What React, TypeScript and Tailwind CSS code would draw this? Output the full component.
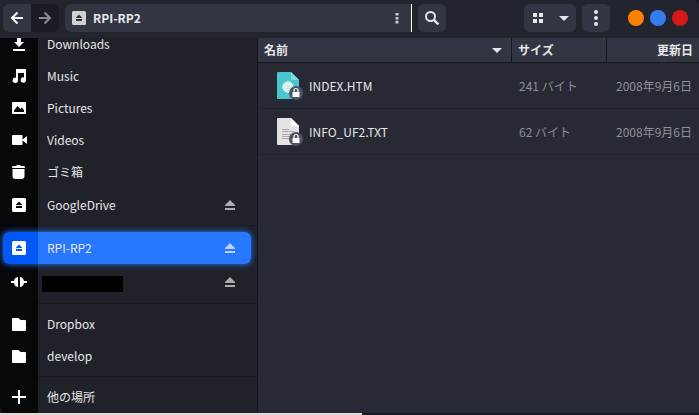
import type { ReactNode } from "react";

type IconProps = { className?: string };

const ArrowIcon = ({ className = "" }: IconProps) => (
  <svg className={className} width="14" height="14" viewBox="0 0 14 14" fill="none" stroke="currentColor" strokeWidth="2" aria-hidden="true">
    <path d="M13 7H2.500M7.500 1.500 2 7l5.500 5.500" />
  </svg>
);

const DriveIcon = ({ className = "" }: IconProps) => (
  <svg className={className} width="14" height="14" viewBox="0 0 14 14" fill="currentColor" fillRule="evenodd" aria-hidden="true">
    <path d="M1.500 0h11A1.500 1.500 0 0 1 14 1.500v11a1.500 1.500 0 0 1-1.500 1.500h-11A1.500 1.500 0 0 1 0 12.500v-11A1.500 1.500 0 0 1 1.500 0zM7 3.500 4 6.500V7h6v-.500zM4 8v2h6V8z" />
  </svg>
);

const DotsIcon = ({ small = false }: { small?: boolean }) => (
  <svg width="4" height={small ? 12 : 16} viewBox={small ? "0 0 4 12" : "0 0 4 16"} fill="currentColor" aria-hidden="true">
    {small ? (
      <path d="M.500 1h3v2.600h-3zM.500 4.900h3v2.600h-3zM.500 8.800h3v2.600h-3z" />
    ) : (
      <>
        <circle cx="2" cy="2" r="2" />
        <circle cx="2" cy="8" r="2" />
        <circle cx="2" cy="14" r="2" />
      </>
    )}
  </svg>
);

const CaretIcon = ({ className = "" }: IconProps) => (
  <svg className={className} width="10" height="5" viewBox="0 0 10 5" fill="currentColor" aria-hidden="true">
    <path d="M0 0h10L5 5z" />
  </svg>
);

const SearchIcon = () => (
  <svg width="14" height="14" viewBox="0 0 14 14" fill="none" stroke="currentColor" strokeWidth="2" aria-hidden="true">
    <circle cx="5.500" cy="5.500" r="4.500" />
    <path d="m8.800 8.800 4.600 4.600" strokeWidth="2.400" />
  </svg>
);

const GridIcon = () => (
  <svg width="10" height="10" viewBox="0 0 10 10" fill="currentColor" aria-hidden="true">
    <path d="M0 0h4v4H0zM6 0h4v4H6zM0 6h4v4H0zM6 6h4v4H6z" />
  </svg>
);

const DownloadIcon = () => (
  <svg width="16" height="16" viewBox="0 0 16 16" fill="currentColor" aria-hidden="true">
    <path d="M6 0h4v6h3l-5 5-5-5h3zM2 13h12v2H2z" />
  </svg>
);

const MusicIcon = () => (
  <svg width="16" height="16" viewBox="0 0 16 16" fill="currentColor" aria-hidden="true">
    <path d="M5 1h10v11a2.700 2.700 0 1 1-2-2.600V5H7v7.300a2.700 2.700 0 1 1-2-2.600z" />
  </svg>
);

const PictureIcon = () => (
  <svg width="14" height="12" viewBox="0 0 14 12" fill="currentColor" fillRule="evenodd" aria-hidden="true">
    <path d="M1 0h12a1 1 0 0 1 1 1v10a1 1 0 0 1-1 1H1a1 1 0 0 1-1-1V1a1 1 0 0 1 1-1zM2 10h10V8L10 5.500 8.500 7 5.500 4 2 8.500z" />
  </svg>
);

const VideoIcon = () => (
  <svg width="16" height="10" viewBox="0 0 16 10" fill="currentColor" aria-hidden="true">
    <path d="M2 0h8.500a1 1 0 0 1 1 1v8a1 1 0 0 1-1 1H2a1 1 0 0 1-1-1V1a1 1 0 0 1 1-1zM11 5l5-4v8z" />
  </svg>
);

const TrashIcon = () => (
  <svg width="14" height="14" viewBox="0 0 14 14" fill="currentColor" aria-hidden="true">
    <path d="M4.500 0h4v1H12a.800.800 0 0 1 .800.800V3H.200V1.800A.800.800 0 0 1 1 1h3.500zM.500 4h12v7a3 3 0 0 1-3 3h-6a3 3 0 0 1-3-3z" />
  </svg>
);

const NetworkIcon = () => (
  <svg width="16" height="10" viewBox="0 0 16 10" fill="currentColor" aria-hidden="true">
    <path d="M0 4h3a4.500 4.500 0 0 1 4-4v10a4.500 4.500 0 0 1-4-4H0zM16 4h-3a4.500 4.500 0 0 0-4-4v10a4.500 4.500 0 0 0 4-4h3z" />
  </svg>
);

const FolderIcon = () => (
  <svg width="14" height="13" viewBox="0 0 14 13" fill="currentColor" aria-hidden="true">
    <path d="M1 0h5.500l2 2H13a1 1 0 0 1 1 1v9a1 1 0 0 1-1 1H1a1 1 0 0 1-1-1V1a1 1 0 0 1 1-1z" />
  </svg>
);

const PlusIcon = () => (
  <svg width="14" height="14" viewBox="0 0 14 14" fill="currentColor" aria-hidden="true">
    <path d="M6 0h2v6h6v2H8v6H6V8H0V6h6z" />
  </svg>
);

const EjectIcon = () => (
  <svg width="10" height="10" viewBox="0 0 10 10" fill="currentColor" aria-hidden="true">
    <path d="m5 0 5 5v1H0V5zM0 8h10v2H0z" />
  </svg>
);

const LockBadge = () => (
  <>
    <circle cx="19" cy="21" r="7" fill="#4f5360" />
    <path d="M15.500 20h7v5h-7z" fill="#fff" />
    <path d="M17 20.500v-2a2 2 0 0 1 4 0v2" fill="none" stroke="#fff" strokeWidth="1.200" />
  </>
);

const HtmlFileIcon = () => (
  <svg width="26" height="28" viewBox="0 0 26 28" aria-hidden="true">
    <path d="M1 0h13l8 8v18a1 1 0 0 1-1 1H1a1 1 0 0 1-1-1V1a1 1 0 0 1 1-1z" fill="#4bc5cf" />
    <path d="M14 0l8 8h-7a1 1 0 0 1-1-1z" fill="#80dbe1" />
    <circle cx="11" cy="15" r="5.500" fill="#9be3e8" />
    <g fill="none" stroke="#fff" strokeWidth="1">
      <circle cx="11" cy="15" r="5" />
      <ellipse cx="11" cy="15" rx="2.300" ry="5" />
      <path d="M6 15h10M7 12.500h8M7 17.500h8" />
    </g>
    <LockBadge />
  </svg>
);

const TextFileIcon = () => (
  <svg width="26" height="28" viewBox="0 0 26 28" aria-hidden="true">
    <path d="M1 0h13l8 8v18a1 1 0 0 1-1 1H1a1 1 0 0 1-1-1V1a1 1 0 0 1 1-1z" fill="#e3e3e3" />
    <path d="M14 0l8 8h-7a1 1 0 0 1-1-1z" fill="#fff" />
    <path d="M5 11.500h7M5 13.500h12M5 16.500h12M5 18.500h9M5 20.500h7" stroke="#aaa" strokeWidth="1" />
    <LockBadge />
  </svg>
);

type Place = { label: string; icon: ReactNode; eject?: boolean; selected?: boolean; hidden?: boolean };

const folders: Place[] = [
  { label: "Downloads", icon: <DownloadIcon /> },
  { label: "Music", icon: <MusicIcon /> },
  { label: "Pictures", icon: <PictureIcon /> },
  { label: "Videos", icon: <VideoIcon /> },
  { label: "ゴミ箱", icon: <TrashIcon /> },
];
const drives: Place[] = [{ label: "GoogleDrive", icon: <DriveIcon />, eject: true }];
const devices: Place[] = [
  { label: "RPI-RP2", icon: <DriveIcon />, eject: true, selected: true },
  { label: "", icon: <NetworkIcon />, eject: true, hidden: true },
];
const bookmarks: Place[] = [
  { label: "Dropbox", icon: <FolderIcon /> },
  { label: "develop", icon: <FolderIcon /> },
];
const others: Place[] = [{ label: "他の場所", icon: <PlusIcon /> }];

function PlaceRow({ place }: { place: Place }) {
  return (
    <li
      className={`ml-[3px] mr-1.5 flex h-8 items-center rounded-md ${
        place.selected
          ? "bg-[linear-gradient(to_right,#0059f5_35px,#2777ff_35px)] shadow-[0_0_6px_#2777ff]"
          : ""
      }`}
    >
      <button type="button" aria-label={place.hidden ? "Network" : undefined} className="flex h-full min-w-0 flex-1 items-center text-left">
        <span className="flex w-8 shrink-0 justify-center text-white">{place.icon}</span>
        {place.hidden ? (
          <span className="ml-[7px] mt-1 h-4 w-[81px] bg-black" />
        ) : (
          <span className="ml-3 leading-none">{place.label}</span>
        )}
      </button>
      {place.eject && (
        <button type="button" aria-label="Eject" className={`mr-4 ${place.selected ? "text-[#b9d2ff]" : "text-[#adaeb0]"}`}>
          <EjectIcon />
        </button>
      )}
    </li>
  );
}

function PlaceGroup({ places, className }: { places: Place[]; className: string }) {
  return (
    <ul className={className}>
      {places.map((place, i) => (
        <PlaceRow key={i} place={place} />
      ))}
    </ul>
  );
}

const files = [
  { name: "INDEX.HTM", size: "241 バイト", date: "2008年9月6日", icon: <HtmlFileIcon /> },
  { name: "INFO_UF2.TXT", size: "62 バイト", date: "2008年9月6日", icon: <TextFileIcon /> },
];

export default function App() {
  return (
    <div className="flex h-screen flex-col overflow-hidden bg-[#171921] font-['Noto_Sans_CJK_JP',sans-serif] text-xs text-[#e6e6e8]">
      <header className="flex h-[38px] shrink-0 items-start rounded-tr-md bg-[#22252d] pl-[3px] pr-[11px] pt-1">
        <div className="flex h-7 overflow-hidden rounded-md">
          <button type="button" aria-label="Back" className="flex w-7 items-center justify-center bg-[#323643] text-white">
            <ArrowIcon />
          </button>
          <button type="button" aria-label="Forward" disabled className="flex w-7 items-center justify-center bg-[#1a1c23] text-[#8b8c90]">
            <ArrowIcon className="rotate-180" />
          </button>
        </div>
        <div className="ml-1.5 flex h-7 w-[347px] min-w-0 shrink items-center rounded-l-md border-r border-white bg-[#323643] pl-[7px] pr-3">
          <button type="button" className="flex min-w-0 flex-1 items-center gap-[7px] font-bold">
            <DriveIcon className="text-[#d0d1d3]" />
            RPI-RP2
          </button>
          <button type="button" aria-label="Path options" className="text-[#c8c9cc]">
            <DotsIcon small />
          </button>
        </div>
        <button type="button" aria-label="Search" className="ml-1.5 flex size-7 shrink-0 items-center justify-center rounded-md bg-[#323643]">
          <SearchIcon />
        </button>
        <div className="ml-auto flex h-7 shrink-0 rounded-md bg-[#323643]">
          <button type="button" aria-label="Icon view" className="flex w-7 items-center justify-center">
            <GridIcon />
          </button>
          <button type="button" aria-label="View options" className="flex w-6 items-center justify-center">
            <CaretIcon />
          </button>
        </div>
        <button type="button" aria-label="Menu" className="ml-1.5 flex size-7 shrink-0 items-center justify-center rounded-md bg-[#323643]">
          <DotsIcon />
        </button>
        <div className="ml-[18px] flex h-7 shrink-0 items-center gap-1.5">
          <button type="button" aria-label="Minimize" className="size-4 rounded-full bg-[#ff8000]" />
          <button type="button" aria-label="Maximize" className="size-4 rounded-full bg-[#367bf0]" />
          <button type="button" aria-label="Close" className="size-4 rounded-full bg-[#d41919]" />
        </div>
      </header>

      <div className="flex min-h-0 flex-1">
        <nav className="flex w-[258px] shrink-0 flex-col justify-end overflow-hidden rounded-bl-md border-r border-[#15171e] bg-[linear-gradient(to_right,#07080a_38px,#1f2229_38px)]">
          <PlaceGroup places={folders} className="pb-px" />
          <PlaceGroup places={drives} className="pb-1" />
          <PlaceGroup places={devices} className="flex flex-col gap-0.5 border-t border-black/15 pb-[5px] pt-1.5" />
          <PlaceGroup places={bookmarks} className="border-t border-black/15 pb-1 pt-1" />
          <PlaceGroup places={others} className="border-t border-black/15 pt-1" />
        </nav>

        <main className="min-w-0 flex-1 bg-[#272a34]">
          <table className="w-full table-fixed border-separate border-spacing-0">
            <thead className="bg-[#323643]">
              <tr className="h-[25px]">
                <th scope="col" className="border-b border-r border-[#15171e] p-0">
                  <button type="button" className="flex w-full items-center justify-between pl-1.5 pr-[9px] font-bold">
                    名前
                    <CaretIcon />
                  </button>
                </th>
                <th scope="col" className="w-[95px] border-b border-r border-[#15171e] p-0 pl-1.5 text-left font-bold">サイズ</th>
                <th scope="col" className="w-[92px] border-b border-[#15171e] p-0 pr-1.5 text-right font-bold">更新日</th>
              </tr>
            </thead>
            <tbody>
              {files.map((file) => (
                <tr key={file.name} className="h-[46px]">
                  <td className="border-b border-[#20232b] p-0 pl-[19px]">
                    <span className="flex items-center gap-1.5">
                      {file.icon}
                      {file.name}
                    </span>
                  </td>
                  <td className="border-b border-[#20232b] p-0 pl-[7px] text-[#8f9095]">{file.size}</td>
                  <td className="border-b border-[#20232b] p-0 pr-[7px] text-right text-[#8f9095]">{file.date}</td>
                </tr>
              ))}
            </tbody>
          </table>
        </main>
      </div>
      <div className="h-0.5 shrink-0 bg-[linear-gradient(to_right,#dedbd8_362px,#171b22_362px)]" />
    </div>
  );
}
